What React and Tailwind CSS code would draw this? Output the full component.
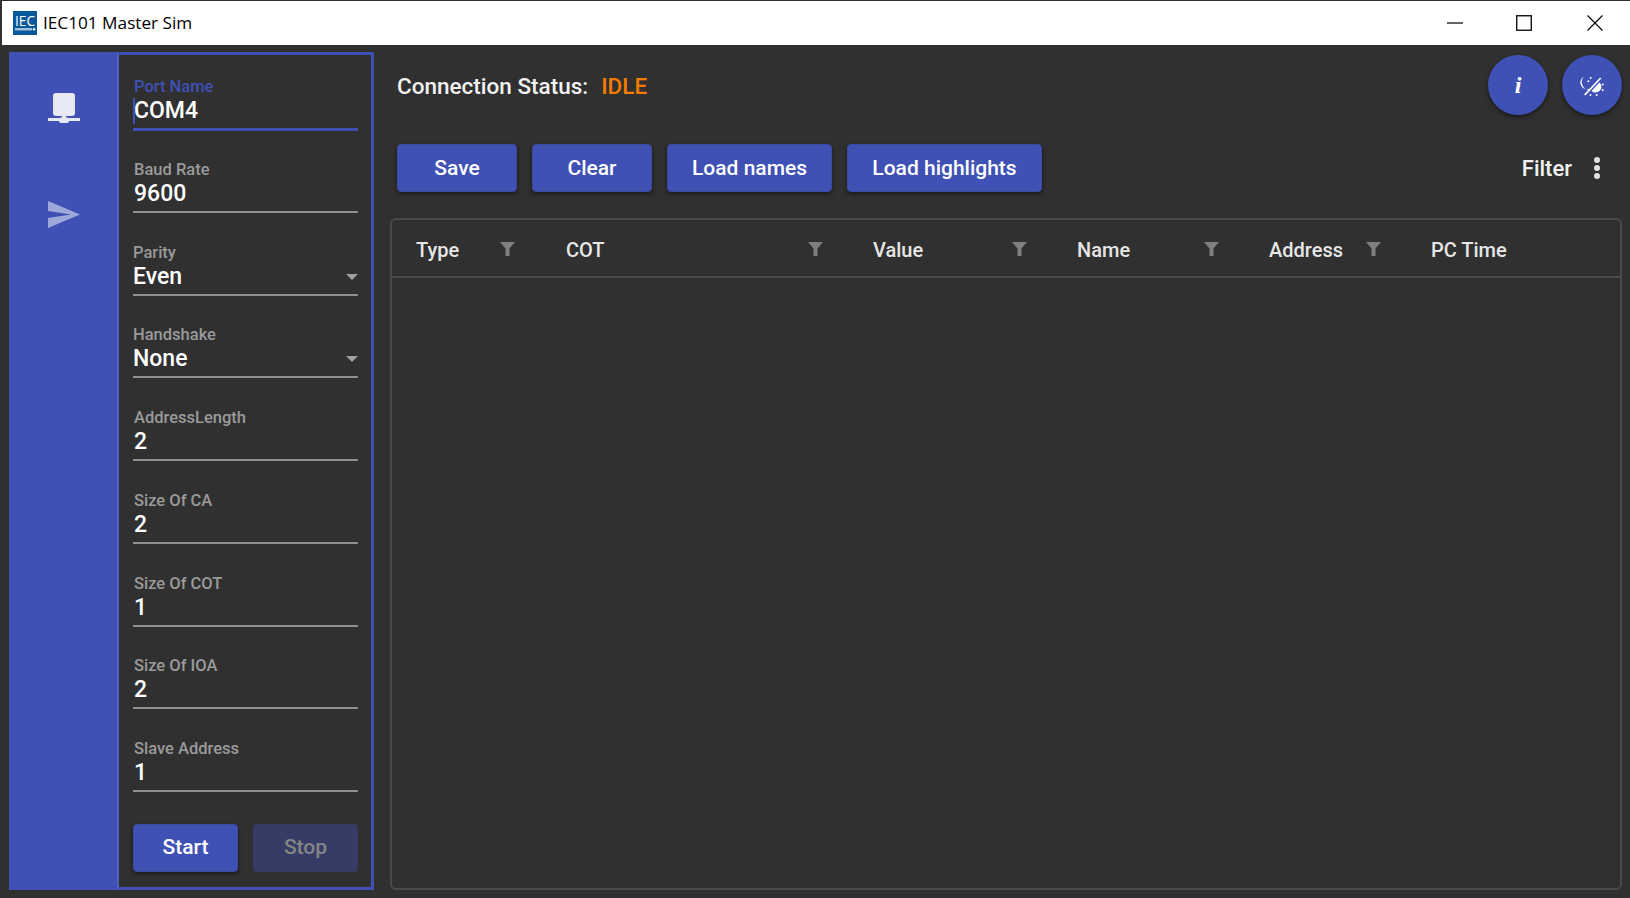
const fields = [
  { label: 'Port Name', value: 'COM4', focused: true },
  { label: 'Baud Rate', value: '9600' },
  { label: 'Parity', value: 'Even', select: true },
  { label: 'Handshake', value: 'None', select: true },
  { label: 'AddressLength', value: '2' },
  { label: 'Size Of CA', value: '2' },
  { label: 'Size Of COT', value: '1' },
  { label: 'Size Of IOA', value: '2' },
  { label: 'Slave Address', value: '1' },
];

const columns = [
  { name: 'Type', width: 'w-[150px]', filter: 'w-[84px]' },
  { name: 'COT', width: 'w-[307px]', filter: 'w-[242px]' },
  { name: 'Value', width: 'w-[204px]', filter: 'w-[139px]' },
  { name: 'Name', width: 'w-[192px]', filter: 'w-[127px]' },
  { name: 'Address', width: 'w-[162px]', filter: 'w-[97px]' },
  { name: 'PC Time', width: 'w-[150px]' },
];

const Funnel = () => (
  <svg width="15" height="14" viewBox="0 0 15 14" className="mb-[2px] shrink-0">
    <path d="M0 0H15L9.500 6.500V14H5.500V6.500Z" fill="#7f7f7f" />
  </svg>
);

const Field = ({ label, value, focused, select }) => (
  <div className="h-[82.75px] pt-[16px]">
    <div className={`text-[16.5px] leading-[20px] font-medium ${select ? '' : 'pl-[1px]'} ${focused ? 'text-[#3f51b5]' : 'text-[#9a9a9a]'}`}>{label}</div>
    <div className="relative flex h-[28px] items-center justify-between text-[23px] font-medium text-white">
      {focused && <div className="absolute left-0 top-[1px] h-[26px] w-[2px] bg-[#3f51b5]" />}
      <span className={`leading-[28px] ${select ? '' : 'pl-[1px]'}`}>{value}</span>
      {select && (
        <svg width="12" height="6" viewBox="0 0 12 6">
          <path d="M0 0H12L6 6Z" fill="#a0a0a0" />
        </svg>
      )}
    </div>
    <div className={`mt-[3px] ${focused ? 'h-[3px] bg-[#3f51b5]' : 'h-[2px] bg-[#8f8f8f]'}`} />
  </div>
);

const Button = ({ children, className = '' }) => (
  <button className={`flex h-[48px] items-center justify-center rounded-[4px] border border-[#3a4a9f] bg-[#3f51b5] text-[21px] font-medium text-white shadow-[0_2px_4px_rgba(0,0,0,0.5)] ${className}`}>
    {children}
  </button>
);

export default function App() {
  return (
    <div className="flex h-[898px] w-[1630px] flex-col overflow-hidden bg-[#303030] font-['Roboto',sans-serif]">
      <div className="mb-[7px] ml-[2px] mt-[1px] flex h-[44px] items-center bg-white pl-[11px]">
        <svg width="24" height="24" viewBox="0 0 24 24" className="shrink-0">
          <rect width="24" height="24" fill="#07589b" />
          <rect x="2" y="17" width="17" height="2.500" fill="#9dbfdc" />
          <circle cx="21" cy="18.250" r="1.200" fill="#fff" />
          <text x="2" y="14.500" textLength="20" lengthAdjust="spacingAndGlyphs" fontSize="15" fill="#fff" fontFamily="'Open Sans', sans-serif">IEC</text>
        </svg>
        <span className="ml-[6px] font-['Open_Sans',sans-serif] text-[17.2px] text-black">IEC101 Master Sim</span>
        <div className="ml-auto flex items-center">
          <svg width="16" height="16" viewBox="0 0 16 16" className="mr-[53px]">
            <path d="M0 8H16" stroke="#000" strokeWidth="1.200" />
          </svg>
          <svg width="16" height="16" viewBox="0 0 16 16" className="mr-[55px]">
            <rect x="0.750" y="0.750" width="14.500" height="14.500" fill="none" stroke="#000" strokeWidth="1.300" />
          </svg>
          <svg width="16" height="16" viewBox="0 0 16 16" className="mr-[27px]">
            <path d="M0.500 0.500L15.500 15.500M15.500 0.500L0.500 15.500" stroke="#000" strokeWidth="1.100" />
          </svg>
        </div>
      </div>

      <div className="flex min-h-0 flex-1 pb-[8px] pl-[9px] pr-[8px]">
        <div className="flex w-[108px] shrink-0 flex-col items-center bg-[#3f51b5] pl-[1px] pt-[41px]">
          <svg width="32" height="30" viewBox="0 0 32 30">
            <rect x="5" y="0" width="22" height="23" rx="3" fill="#e6e8f6" />
            <rect x="14" y="23" width="4" height="4" fill="#e6e8f6" />
            <rect x="0" y="25" width="32" height="3" fill="#e6e8f6" />
            <rect x="11" y="24.500" width="10" height="5.500" rx="2" fill="#e6e8f6" />
          </svg>
          <svg width="32" height="28" viewBox="0 0 32 28" className="mt-[78px]">
            <path d="M0 0L32 13.500L0 27V17L23 13.500L0 10Z" fill="#9fa8da" />
          </svg>
        </div>

        <div className="flex w-[257px] shrink-0 flex-col border-b-[3px] border-l-2 border-r-[3px] border-t-[3px] border-b-[#3f51b5] border-l-[#5060c4] border-r-[#3f51b5] border-t-[#3f51b5] pl-[14px] pr-[13px]">
          <div className="mt-[6px]">
            {fields.map((f) => (
              <Field key={f.label} {...f} />
            ))}
          </div>
          <div className="mt-[18px] flex justify-between">
            <Button className="w-[105px]">Start</Button>
            <button className="h-[48px] w-[105px] rounded-[4px] bg-[#363c66] text-[21px] font-medium text-[#858585]">Stop</button>
          </div>
        </div>

        <div className="flex min-w-0 flex-1 flex-col pl-[16px]">
          <div className="flex h-[92px] items-start">
            <div className="mt-[20px] flex pl-[7px] text-[22.500px] font-medium leading-[28px]">
              <span className="text-[#f2f2f2]">Connection Status:</span>
              <span className="ml-[13px] text-[#f57c00]">IDLE</span>
            </div>
            <div className="ml-auto mt-[3px] flex gap-[14px]">
              <div className="flex h-[60px] w-[60px] items-center justify-center rounded-full bg-[#3f51b5] font-['Liberation_Serif',serif] text-[24px] font-bold italic text-white shadow-[0_2px_4px_rgba(0,0,0,0.5)]">i</div>
              <div className="flex h-[60px] w-[60px] items-center justify-center rounded-full bg-[#3f51b5] shadow-[0_2px_4px_rgba(0,0,0,0.5)]">
                <svg width="24" height="24" viewBox="0 0 24 24">
                  <path d="M4.700 22L20.700 5" stroke="#fff" strokeWidth="1.800" />
                  <path d="M4 3.500A8 8 0 0 0 9 17L10.300 15.500A6.500 6.500 0 0 1 4 3.500Z" fill="#fff" />
                  <circle cx="10.700" cy="5" r="1" fill="#fff" />
                  <circle cx="8.400" cy="8.300" r="1" fill="#fff" />
                  <path d="M19.500 9.500A5.800 5.800 0 0 1 11.500 18Z" fill="#fff" />
                  <circle cx="22.700" cy="11.500" r="1" fill="#fff" />
                  <circle cx="22.700" cy="17" r="1" fill="#fff" />
                  <circle cx="16.700" cy="22" r="1" fill="#fff" />
                  <circle cx="10.500" cy="22" r="1" fill="#fff" />
                </svg>
              </div>
            </div>
          </div>
          <div className="flex h-[48px] items-center gap-[15px] pl-[7px]">
            <Button className="w-[120px] pt-[2px]">Save</Button>
            <Button className="w-[120px] pt-[2px]">Clear</Button>
            <Button className="w-[165px] pt-[2px]">Load names</Button>
            <Button className="w-[195px] pt-[2px]">Load highlights</Button>
            <span className="ml-auto pt-[1px] text-[22px] font-medium text-[#f2f2f2]">Filter</span>
            <svg width="8" height="24" viewBox="0 0 8 24" className="ml-[6px] mr-[21px]">
              <circle cx="4" cy="4" r="3" fill="#e0e0e0" />
              <circle cx="4" cy="12" r="3" fill="#e0e0e0" />
              <circle cx="4" cy="20" r="3" fill="#e0e0e0" />
            </svg>
          </div>
          <div className="mt-[26px] flex min-h-0 flex-1 flex-col rounded-[6px] border-2 border-[#4a4a4a]">
            <div className="flex h-[58px] shrink-0 items-center border-b-2 border-[#4a4a4a] pl-[24px] pt-[4px] text-[20px] font-medium text-[#e6e6e6]">
              {columns.map((c) => (
                <div key={c.name} className={`flex shrink-0 items-center ${c.width}`}>
                  <span className={c.filter ? `${c.filter} shrink-0` : ''}>{c.name}</span>
                  {c.filter && <Funnel />}
                </div>
              ))}
            </div>
          </div>
        </div>
      </div>
    </div>
  );
}
